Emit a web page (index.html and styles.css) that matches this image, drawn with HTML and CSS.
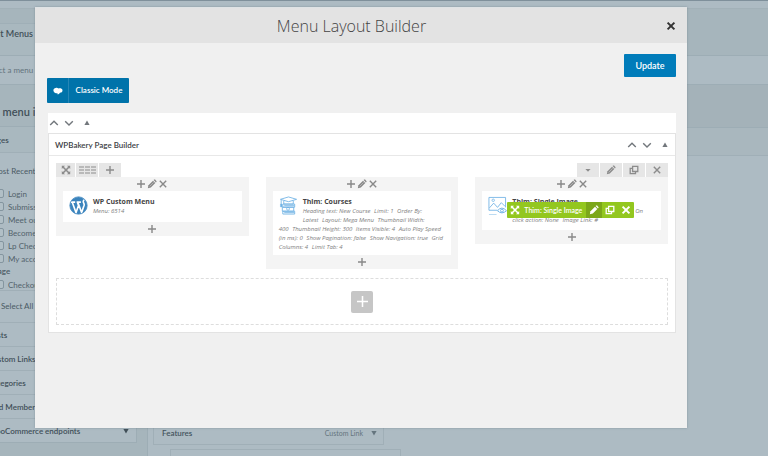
FILE: index.html
```
<!DOCTYPE html>
<html lang="en">
<head>
<meta charset="utf-8">
<title>Menu Layout Builder</title>
<link rel="stylesheet" href="styles.css">
</head>
<body>
<svg class="sprite" aria-hidden="true">
  <symbol id="plus" viewBox="0 0 10 10"><path d="M5 1v8M1 5h8" fill="none" stroke="currentColor" stroke-width="1.4"/></symbol>
  <symbol id="cross" viewBox="0 0 10 10"><path d="M1.8 1.8l6.4 6.4M8.2 1.8L1.8 8.2" fill="none" stroke="currentColor" stroke-width="1.4"/></symbol>
  <symbol id="cross-bold" viewBox="0 0 10 10"><path d="M1.600 1.600l6.800 6.800M8.400 1.600L1.600 8.400" fill="none" stroke="currentColor" stroke-width="2"/></symbol>
  <symbol id="pencil" viewBox="0 0 10 10"><path d="M.8 9.2l.7-3L6 1.700l2.300 2.300-4.500 4.500z" fill="currentColor"/><path d="M6.600 1.100l.5-.5q.5-.4 1 0l1.300 1.300q.4.5 0 1l-.5.5z" fill="currentColor"/><path d="M2.600 7.400l4-4" stroke="#fff" stroke-opacity=".6" stroke-width=".6"/></symbol>
  <symbol id="copy" viewBox="0 0 10 10"><path d="M3.600 1.300h5.200v5.200H3.600zM3.400 3.400H1.200v5.300h5.300V6.700" fill="none" stroke="currentColor" stroke-width="1.300"/></symbol>
  <symbol id="move" viewBox="0 0 10 10"><path d="M2 2l6 6M8 2L2 8" stroke="currentColor" stroke-width="1.600"/><path d="M.8.8h3.200L.8 4zM9.200.8H6l3.200 3.200zM.8 9.200H4L.8 6zM9.200 9.200H6L9.200 6z" fill="currentColor"/></symbol>
  <symbol id="up" viewBox="0 0 10 10"><path d="M1.200 7L5 3.200 8.800 7" fill="none" stroke="currentColor" stroke-width="1.400"/></symbol>
  <symbol id="down" viewBox="0 0 10 10"><path d="M1.200 3.200L5 7l3.800-3.800" fill="none" stroke="currentColor" stroke-width="1.400"/></symbol>
  <symbol id="tri-up" viewBox="0 0 10 10"><path d="M5 2.500L7.600 7H2.400z" fill="currentColor"/></symbol>
  <symbol id="tri-down" viewBox="0 0 10 10"><path d="M2.400 3h5.200L5 7.500z" fill="currentColor"/></symbol>
  <symbol id="caret" viewBox="0 0 10 10"><path d="M2.400 4h5.200L5 6.800z" fill="currentColor"/></symbol>
</svg>

<div class="page">
  <div class="adminbar"></div>
  <div class="tabs"><a class="tab" href="#">Edit Menus</a></div>
  <div class="select-row">Select a menu to edit:</div>
  <div class="columns">
    <div class="sidebar">
      <h2 class="side-title">Add menu items</h2>
      <div class="panel">
        <h3 class="acc first">Pages</h3>
        <div class="pages">
          <p class="page-tabs">Most Recent</p>
          <label class="check"><input type="checkbox">Login</label>
          <label class="check"><input type="checkbox">Submission</label>
          <label class="check"><input type="checkbox">Meet our team</label>
          <label class="check"><input type="checkbox">Become a teacher</label>
          <label class="check"><input type="checkbox">Lp Checkout</label>
          <label class="check"><input type="checkbox">My account</label>
          <p class="note">Page</p>
          <label class="check"><input type="checkbox">Checkout</label>
        </div>
        <p class="select-all">Select All</p>
        <h3 class="acc">Posts</h3>
        <h3 class="acc">Custom Links</h3>
        <h3 class="acc">Categories</h3>
        <h3 class="acc">Paid Memberships</h3>
        <h3 class="acc woo">WooCommerce endpoints <svg class="icon"><use href="#tri-down"/></svg></h3>
      </div>
    </div>
    <div class="structure">
      <div class="structure-head"></div>
      <div class="structure-body">
        <div class="menu-item"><b>Features</b><span>Custom Link</span><svg class="icon"><use href="#tri-down"/></svg></div>
        <div class="menu-item sub"></div>
      </div>
    </div>
  </div>
</div>

<main class="modal">
  <header class="modal-head">
    <h1>Menu Layout Builder</h1>
    <button class="close" aria-label="Close"><svg class="icon"><use href="#cross-bold"/></svg></button>
  </header>
  <div class="modal-body">
    <button class="update">Update</button>
    <button class="classic">
      <span class="classic-icon"><svg viewBox="0 0 10 8"><path d="M2.600 1C4 .4 4.800 1 5.300 1.500 6.400.9 9.300 1 9.500 3.200c.2 1.700-1.300 2.500-2.500 2.500C6.300 6.700 5.600 7.300 4.600 7.500c.2-.6 0-1-.3-1.200C2.600 6.300.5 5.500.4 3.500.3 2 1.500 1.200 2.600 1z" fill="#fff"/></svg></span>
      <span class="classic-text">Classic Mode</span>
    </button>
    <section class="boxes">
      <div class="bar">
        <svg class="icon"><use href="#up"/></svg><svg class="icon"><use href="#down"/></svg><svg class="icon last"><use href="#tri-up"/></svg>
      </div>
      <div class="builder">
        <div class="bar head">
          <h2>WPBakery Page Builder</h2>
          <svg class="icon"><use href="#up"/></svg><svg class="icon"><use href="#down"/></svg><svg class="icon last"><use href="#tri-up"/></svg>
        </div>
        <div class="canvas">
          <div class="row-controls">
            <button class="move" aria-label="Move row"><svg class="icon"><use href="#move"/></svg></button>
            <button aria-label="Row layout"><svg class="lines" viewBox="0 0 17 8"><path d="M0 1h5M6 1h5M12 1h5M0 4h5M6 4h5M12 4h5M0 7h5M6 7h5M12 7h5" stroke="currentColor" stroke-width="1"/></svg></button>
            <button aria-label="Add column"><svg class="icon"><use href="#plus"/></svg></button>
            <button class="right" aria-label="Toggle row"><svg class="icon"><use href="#caret"/></svg></button>
            <button aria-label="Edit row"><svg class="icon"><use href="#pencil"/></svg></button>
            <button aria-label="Clone row"><svg class="icon"><use href="#copy"/></svg></button>
            <button aria-label="Delete row"><svg class="icon"><use href="#cross"/></svg></button>
          </div>
          <div class="grid">
            <div class="col">
              <div class="col-controls"><svg class="icon"><use href="#plus"/></svg><svg class="icon"><use href="#pencil"/></svg><svg class="icon"><use href="#cross"/></svg></div>
              <article class="card">
                <svg class="thumb" viewBox="0 0 20 20"><circle cx="10" cy="10" r="9" fill="#3b84bd"/><path d="M2 6.500h4.500M8 6.500h4.500M3.400 6.500l4 11L10 10 8.800 6.500M9.300 6.500l4 11 2.600-7.700c.5-1.800-.9-2.500-.9-4 0-1 .6-1.800 1.500-1.900" fill="none" stroke="#fff" stroke-width="1.700"/><circle cx="10" cy="10" r="9.100" fill="none" stroke="#3b84bd" stroke-width=".9"/></svg>
                <h3>WP Custom Menu</h3>
                <p>Menu: 6514</p>
              </article>
              <div class="col-add"><svg class="icon"><use href="#plus"/></svg></div>
            </div>
            <div class="col">
              <div class="col-controls"><svg class="icon"><use href="#plus"/></svg><svg class="icon"><use href="#pencil"/></svg><svg class="icon"><use href="#cross"/></svg></div>
              <article class="card">
                <svg class="thumb" viewBox="0 0 20 20" fill="none" stroke="#6fb2e4"><path d="M1.500 3.500L10 1l8.500 2.500L10 6zM5 5v3.500h10V5M2.300 4v5" stroke-width=".9"/><path d="M1.500 8.500h1.700v3H1.500z" fill="#6fb2e4" stroke-width=".4"/><path d="M4 8.500h12.500v3.300H4zM3.500 11.800h12V16h-12zM4 16h12.500v3H4zM5.500 10.200H16M5.500 17.500H16" stroke-width=".9"/><circle cx="9.500" cy="13.500" r="1.500" stroke-width=".8"/></svg>
                <h3>Thim: Courses</h3>
                <p><span>Heading text: New Course</span> <span>Limit: 1</span> <span>Order By:</span><br><span>Latest</span> <span>Layout: Mega Menu</span> <span>Thumbnail Width:</span><br><span>400</span> <span>Thumbnail Height: 300</span> <span>Items Visible: 4</span> <span>Auto Play Speed</span><br><span>(in ms): 0</span> <span>Show Pagination: false</span> <span>Show Navigation: true</span> <span>Grid</span><br><span>Columns: 4</span> <span>Limit Tab: 4</span></p>
              </article>
              <div class="col-add"><svg class="icon"><use href="#plus"/></svg></div>
            </div>
            <div class="col">
              <div class="col-controls"><svg class="icon"><use href="#plus"/></svg><svg class="icon"><use href="#pencil"/></svg><svg class="icon"><use href="#cross"/></svg></div>
              <article class="card short">
                <svg class="thumb" viewBox="0 0 20 20" fill="none" stroke="#6fb2e4"><path d="M10 15H1V1.500h17.500V12M1.500 12.500L6 7.500l4 4.500 4-5 4 4" stroke-width=".9"/><circle cx="5.500" cy="4.500" r="1.300" stroke-width=".8"/><path d="M10 15.500q4.500-5.500 9.500 0-5 4.500-9.500 0z" fill="#fff" stroke-width="1"/><circle cx="14.700" cy="15.400" r="1.500" stroke-width="1"/><path d="M1 19.500h8" stroke-width=".5"/></svg>
                <h3>Thim: Single Image</h3>
                <p class="split">On</p>
                <p><span>click action: None</span> <span>Image Link: #</span></p>
                <div class="hover-bar">
                  <svg class="icon"><use href="#move"/></svg>
                  <span>Thim: Single Image</span>
                  <button class="active" aria-label="Edit"><svg class="icon"><use href="#pencil"/></svg></button>
                  <button aria-label="Clone"><svg class="icon"><use href="#copy"/></svg></button>
                  <button aria-label="Delete"><svg class="icon"><use href="#cross-bold"/></svg></button>
                </div>
              </article>
              <div class="col-add"><svg class="icon"><use href="#plus"/></svg></div>
            </div>
          </div>
          <div class="drop"><button aria-label="Add element"><svg viewBox="0 0 10 10"><path d="M5 0v10M0 5h10" stroke="#fff" stroke-width="1.400"/></svg></button></div>
        </div>
      </div>
    </section>
  </div>
</main>
</body>
</html>
```

FILE: styles.css
```
* { box-sizing: border-box; }
body { margin: 0; height: 100vh; overflow: hidden; background: #adbbc3; font: 8px/12px Lato, "Open Sans", sans-serif; color: #4a5a64; }
h1, h2, h3, p { margin: 0; font-weight: 400; font-size: 8px; }
button { border: 0; padding: 0; margin: 0; font: inherit; color: inherit; background: none; display: flex; align-items: center; justify-content: center; }
.sprite { position: absolute; width: 0; height: 0; }
.icon { width: 10px; height: 10px; display: block; flex: none; }

/* page behind the dialog */
.page { height: 100vh; display: flex; flex-direction: column; margin-left: -16px; overflow: hidden; }
.adminbar { height: 9px; flex: none; background: #adbbc3; border-top: 1px solid #7f909b; border-bottom: 1px solid #a2b1b8; }
.tabs { height: 47px; flex: none; display: flex; background: #a6b5bc; border-bottom: 1px solid #9dadb5; padding-top: 14px; }
.tab { width: 90px; padding-left: 4px; color: #414f58; text-decoration: none; font-size: 9px; font-weight: 600; line-height: 20px; background: #a9b8bf; border-top: 1px solid #9fafb7; }
.select-row { height: 29px; flex: none; line-height: 29px; background: #adbbc3; border-bottom: 1px solid #9dadb5; color: #64747d; }
.columns { flex: 1; display: flex; min-height: 0; background: #a6b5bc; }
.sidebar { width: 153px; flex: none; }
.side-title { height: 41px; line-height: 54px; margin-left: -4px; font-size: 11px; font-weight: 600; color: #414f58; }
.panel { background: #adbbc3; border: 1px solid #9dadb5; }
.acc { height: 24px; line-height: 24px; font-weight: 600; border-top: 1px solid #a0afb7; color: #414f58; display: flex; align-items: center; white-space: nowrap; padding-left: 3px; }
.acc.first { height: 26px; border-top: 0; border-bottom: 1px solid #a0afb7; background: #a9b8bf; }
.acc.woo { justify-content: space-between; padding-right: 5px; }
.pages { padding: 12px 0 0 8px; border-bottom: 1px solid #a0afb7; height: 138px; }
.page-tabs { height: 22px; margin-left: -2px; }
.check { height: 13px; display: flex; align-items: center; gap: 4px; color: #52626b; }
.check input { appearance: none; margin: 0; width: 11px; height: 9px; border: 1px solid #84959f; border-radius: 2px; background: #b1bfc6; }
.note { height: 13px; font-weight: 600; }
.select-all { height: 31px; line-height: 30px; padding-left: 16px; }
.structure { flex: 1; margin-left: 10px; display: flex; flex-direction: column; border-left: 1px solid #9dadb5; }
.structure-head { height: 71px; flex: none; border-bottom: 1px solid #a0afb7; background: linear-gradient(#a4b2b9 0 42px, #9dadb5 42px 43px, #a9b7be 43px); }
.structure-body { flex: 1; display: flex; flex-direction: column; justify-content: flex-end; background: #adbbc3; padding-left: 5px; }
.menu-item { width: 231px; height: 24px; flex: none; display: flex; align-items: center; border: 1px solid #a0afb7; padding: 0 4px 0 8px; color: #65757e; }
.menu-item b { flex: 1; font-weight: 600; color: #44545e; }
.menu-item span { font-size: 7px; }
.menu-item .icon { margin-left: 6px; }
.menu-item.sub { margin: 4px 0 0 17px; height: 7px; border-bottom: 0; }

/* dialog */
.modal { position: absolute; inset: 7px 81px 28px 35px; background: #f0f0f0; border: 1px solid #dfe3e5; border-width: 1px 0 0; box-shadow: 0 0 2px rgba(90, 110, 120, .5); display: flex; flex-direction: column; }
.modal-head { height: 35px; flex: none; display: flex; align-items: center; background: #e3e3e3; padding: 0 11px 0 2px; }
.modal-head h1 { flex: 1; text-align: center; font-size: 16px; line-height: 24px; font-weight: 300; color: #444; font-family: "Open Sans", sans-serif; }
.close { color: #333; width: 10px; }
.modal-body { padding: 11px 11px 0 12px; display: flex; flex-direction: column; color: #555; }
.update { align-self: flex-end; width: 52px; height: 23px; background: #007cba; color: #fff; font-size: 9px; border-radius: 1px; font-weight: 600; }
.classic { width: 82px; height: 25px; margin-top: 1px; background: #0073aa; color: #fff; border-radius: 1px; font-weight: 600; align-items: stretch; }
.classic-icon { width: 22px; display: flex; align-items: center; justify-content: center; border-right: 1px solid #2686b6; }
.classic-icon svg { width: 10px; height: 8px; }
.classic-text { flex: 1; line-height: 25px; }
.boxes { margin: 10px 0 0 1px; }
.bar { height: 20px; display: flex; align-items: center; gap: 5px; background: #fff; color: #72777c; padding-left: 1px; }
.bar .last { margin-left: 3px; }
.builder { background: #fff; border: 1px solid #e3e3e3; }
.bar.head { height: 22px; padding: 0 5px 0 6px; border-bottom: 1px solid #e8e8e8; }
.bar h2 { flex: 1; font-weight: 600; color: #3c4044; }
.canvas { padding: 7px; }
.row-controls { display: flex; gap: 1px; color: #8c8c8c; }
.row-controls button { width: 22px; height: 14px; background: #e6e6e6; }
.row-controls .move { width: 19px; }
.row-controls .right { margin-left: auto; }
.lines { width: 17px; height: 8px; }
.grid { display: grid; grid-template-columns: repeat(3, minmax(0, 1fr)); gap: 17px; align-items: start; }
.col { background: #f4f4f4; padding: 0 7px; }
.col-controls { height: 14px; display: flex; align-items: center; justify-content: center; gap: 1px; color: #888; }
.col-add { height: 14px; display: flex; align-items: center; justify-content: center; color: #888; }
.card { position: relative; background: #fff; padding: 5px 6px 3px; min-height: 31px; white-space: nowrap; font-family: "Open Sans", sans-serif; }
.thumb { float: left; width: 19px; height: 19px; margin: 0 5px 5px 0; }
.card h3 { font-size: 7px; font-weight: 700; line-height: 11px; color: #444; }
.card p { font-size: 6px; line-height: 9px; font-style: italic; color: #808080; }
.card p span { margin-right: 2px; }
.card .split { text-align: right; padding-right: 12px; }
.card.short { min-height: 39px; }
.hover-bar { position: absolute; left: 25px; top: 11px; height: 16px; display: flex; align-items: center; background: #93c71f; color: #fff; padding-left: 3px; font: 600 7px Lato, sans-serif; border-radius: 1px; }
.hover-bar span { padding: 0 4px; }
.hover-bar button { width: 16px; height: 16px; }
.hover-bar .active { background: #7ba71a; }
.drop { margin-top: 9px; height: 47px; border: 1px dashed #ddd; display: flex; align-items: center; justify-content: center; }
.drop button { width: 22px; height: 22px; background: #c6c6c6; border-radius: 2px; }
.drop svg { width: 11px; height: 11px; }
```
